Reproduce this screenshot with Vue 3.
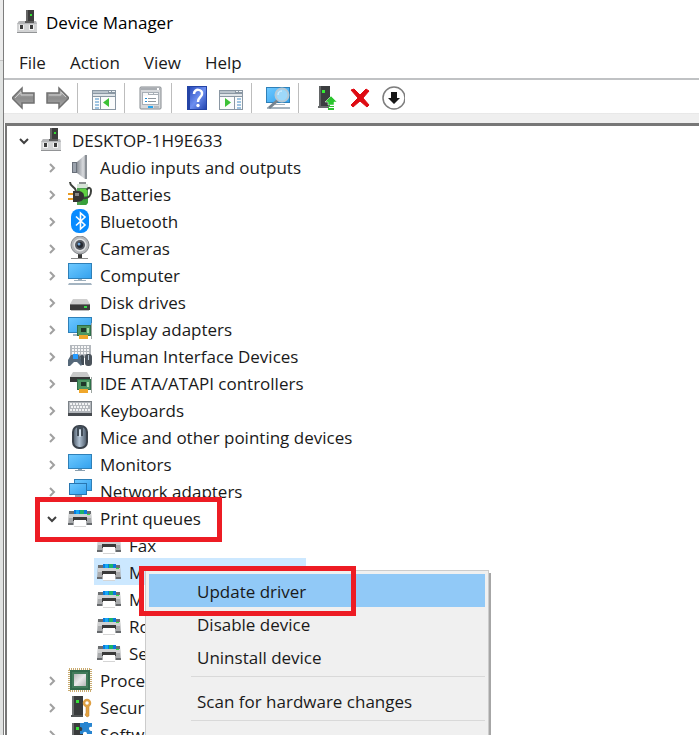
<script setup>
import { computed, reactive } from 'vue'

const menus = ['File', 'Action', 'View', 'Help']

const toolGroups = [
  [{ icon: 'back', label: 'Back' }, { icon: 'forward', label: 'Forward' }],
  [{ icon: 'console-tree', label: 'Show or hide console tree' }],
  [{ icon: 'properties', label: 'Properties' }],
  [{ icon: 'help', label: 'Help' }, { icon: 'action-pane', label: 'Show or hide action pane' }],
  [{ icon: 'scan', label: 'Scan for changes' }],
  [
    { icon: 'update', label: 'Update device' },
    { icon: 'remove', label: 'Uninstall' },
    { icon: 'disable', label: 'Disable' }
  ]
]

const tree = reactive({
  name: 'DESKTOP-1H9E633',
  icon: 'root',
  open: true,
  children: [
    { name: 'Audio inputs and outputs', icon: 'audio' },
    { name: 'Batteries', icon: 'battery' },
    { name: 'Bluetooth', icon: 'bluetooth' },
    { name: 'Cameras', icon: 'camera' },
    { name: 'Computer', icon: 'computer' },
    { name: 'Disk drives', icon: 'disk' },
    { name: 'Display adapters', icon: 'display' },
    { name: 'Human Interface Devices', icon: 'hid' },
    { name: 'IDE ATA/ATAPI controllers', icon: 'ide' },
    { name: 'Keyboards', icon: 'keyboard' },
    { name: 'Mice and other pointing devices', icon: 'mouse' },
    { name: 'Monitors', icon: 'monitor' },
    { name: 'Network adapters', icon: 'network' },
    {
      name: 'Print queues',
      icon: 'printer',
      open: true,
      marked: true,
      children: [
        { name: 'Fax', icon: 'printer', leaf: true },
        { name: 'Microsoft Print to PDF', icon: 'printer', leaf: true, selected: true },
        { name: 'Microsoft XPS Document Writer', icon: 'printer', leaf: true },
        { name: 'Root Print Queue', icon: 'printer', leaf: true },
        { name: 'Send To OneNote', icon: 'printer', leaf: true }
      ]
    },
    { name: 'Processors', icon: 'cpu' },
    { name: 'Security devices', icon: 'security' },
    { name: 'Software components', icon: 'software' }
  ]
})

function flatten(node, level) {
  const rows = [{ node, level }]
  if (node.open && node.children) {
    for (const child of node.children) rows.push(...flatten(child, level + 1))
  }
  return rows
}

const rows = computed(() => flatten(tree, 0))

const contextMenu = [
  [
    { label: 'Update driver', active: true },
    { label: 'Disable device' },
    { label: 'Uninstall device' }
  ],
  [{ label: 'Scan for hardware changes' }],
  []
]
</script>

<template>
  <div class="desktop">
    <svg class="sprite" aria-hidden="true">
      <defs>
        <linearGradient id="g-blue" x1="0" y1="0" x2="1" y2="1">
          <stop offset="0" stop-color="#6cc8ff" /><stop offset="1" stop-color="#35a2ee" />
        </linearGradient>
        <linearGradient id="g-gray" x1="0" y1="0" x2="0" y2="1">
          <stop offset="0" stop-color="#bcbcbc" /><stop offset="0.5" stop-color="#8c8c8c" /><stop offset="1" stop-color="#a8a8a8" />
        </linearGradient>
        <linearGradient id="g-metal" x1="0" y1="0" x2="1" y2="0">
          <stop offset="0" stop-color="#8b9097" /><stop offset="0.6" stop-color="#d9dbde" /><stop offset="1" stop-color="#8d9299" />
        </linearGradient>
        <linearGradient id="g-help" x1="0" y1="0" x2="1" y2="1">
          <stop offset="0" stop-color="#2c4dbd" /><stop offset="0.5" stop-color="#6d8ff0" /><stop offset="1" stop-color="#2345b0" />
        </linearGradient>
        <linearGradient id="g-mouse" x1="0" y1="0" x2="1" y2="0">
          <stop offset="0" stop-color="#4c5967" /><stop offset="0.45" stop-color="#b1c2d3" /><stop offset="1" stop-color="#465463" />
        </linearGradient>
        <linearGradient id="g-silver" x1="0" y1="0" x2="1" y2="1">
          <stop offset="0" stop-color="#b4b7b7" /><stop offset="0.5" stop-color="#e8eaea" /><stop offset="1" stop-color="#b4b7b7" />
        </linearGradient>
      </defs>

      <symbol id="i-root" viewBox="0 0 24 24">
        <path d="M10 0h8v13h-8z" fill="#3d3d3d" /><path d="M10 0h2v13h-2z" fill="#666" />
        <rect x="14" y="4" width="2" height="2" fill="#32e032" />
        <path d="M3 11h17l1 3v9H1v-9z" fill="#d2d3d4" /><path d="M3 11h17l1 3H1z" fill="#b4b5b7" />
        <path d="M1 22h20v1H1z" fill="#929496" />
        <path d="M9 11h9v2h-9z" fill="#5b5b5b" />
        <path d="M3 15h5v5H3zM13 15h5v5h-5z" fill="#f2f2f2" /><path d="M4 15h3v4H4zM14 15h3v4h-3z" fill="#3c3c3c" />
      </symbol>
      <symbol id="i-audio" viewBox="0 0 24 24">
        <path d="M4 7h5v11H4z" fill="#69707a" /><path d="M5 8h3v9H5z" fill="#9ba2ac" />
        <path d="M9 7l8-7h2v24h-2l-8-6z" fill="url(#g-metal)" /><path d="M17 0h2v24h-2z" fill="#8a8f95" />
      </symbol>
      <symbol id="i-battery" viewBox="0 0 24 24">
        <path d="M11 0h7v2h-7z" fill="#8b9090" /><path d="M9 2h11v19l-2 2H9z" fill="#4fa052" />
        <path d="M9 2h11v4H9z" fill="#d7e4d7" /><path d="M12 7h7v7h-7z" fill="#5fd042" />
        <path d="M14 14h6v6l-2 3h-6z" fill="#38a03a" />
        <path d="M2 0c0 5 5 4 6 9M15 16c6 1 8-3 8-7 0-4-3-4-4-1" fill="none" stroke="#3d413c" stroke-width="2" />
        <path d="M0 11h6v2H0zM0 16h6v2H0z" fill="#e79a24" />
        <path d="M5 9h4c5 0 7 2 7 5s-2 6-7 6H5z" fill="#343434" /><path d="M7 11h4v3H7z" fill="#858585" />
      </symbol>
      <symbol id="i-bluetooth" viewBox="0 0 24 24">
        <rect x="3" y="0" width="18" height="24" rx="8" fill="#078bff" />
        <path d="M8 7.500l9 8.500-4.500 4V4L17 8l-9 8.500" fill="none" stroke="#fff" stroke-width="1.600" />
      </symbol>
      <symbol id="i-camera" viewBox="0 0 24 24">
        <path d="M10 18h4v4h-4z" fill="#3a3a3a" /><path d="M3 22h17v1H3z" fill="#888" />
        <circle cx="12" cy="9" r="9" fill="#b4b6b9" stroke="#85888c" />
        <circle cx="12" cy="9" r="6.500" fill="#e1e3e5" /><circle cx="12" cy="9" r="5" fill="#555960" />
        <circle cx="12" cy="9" r="3" fill="#23272e" /><circle cx="11" cy="8" r="1.500" fill="#70a6db" />
      </symbol>
      <symbol id="i-computer" viewBox="0 0 24 24">
        <path d="M0 0h24v16H0z" fill="#2f80b8" /><path d="M1 1h22v14H1z" fill="url(#g-blue)" />
        <path d="M10 16h4v1h-4zM6 17h12v1H6z" fill="#9fb0bd" /><path d="M1 20h22l1 2H0z" fill="#a4b4c1" />
      </symbol>
      <symbol id="i-disk" viewBox="0 0 24 24">
        <path d="M5 9h14l3 5H2z" fill="#cfcfcf" /><path d="M2 14h20v6H2z" fill="#3b3b3b" />
        <path d="M2 14h20v1H2z" fill="#777" /><path d="M16 16h3v2h-3z" fill="#38d848" /><path d="M3 20h18v1H3z" fill="#bbb" />
      </symbol>
      <symbol id="i-board" viewBox="0 0 24 24">
        <path d="M9 8h14v11H9z" fill="#2f7049" /><path d="M10 9h12v9H10z" fill="#4d9663" />
        <path d="M13 11h5v4h-5z" fill="#20382a" /><path d="M19 11h2v5h-2z" fill="#a2d8a6" />
        <path d="M11 18h9v4h-9z" fill="#f0a72b" /><path d="M23 6h1v16h-1z" fill="#9da5a0" />
      </symbol>
      <symbol id="i-display" viewBox="0 0 24 24">
        <path d="M0 0h24v16H0z" fill="#2f80b8" /><path d="M1 1h22v14H1z" fill="url(#g-blue)" />
        <path d="M5 17h5v2H5z" fill="#a4b4c1" /><use href="#i-board" />
      </symbol>
      <symbol id="i-hid" viewBox="0 0 24 24">
        <path d="M2 1h21v13H2z" fill="#b4b8bd" />
        <path d="M4 3h18M4 6h18M4 9h18" stroke="#f7f7f7" stroke-width="2" stroke-dasharray="2 1" />
        <path d="M3 11h8l4 8-2 3-4-4H6l-4 4H0v-6z" fill="#566879" />
        <path d="M5 10h5v5H5z" fill="#269bff" /><path d="M12 12c2-2 4-1 4 1v8h-2z" fill="#414c56" />
        <rect x="17" y="10" width="7" height="12" rx="3" fill="#4b535b" /><path d="M20 11h1v5h-1z" fill="#b7c7d6" />
      </symbol>
      <symbol id="i-ide" viewBox="0 0 24 24">
        <path d="M5 1h14l3 5H2z" fill="#c9caca" /><path d="M2 6h20v5H2z" fill="#363838" /><use href="#i-board" />
      </symbol>
      <symbol id="i-keyboard" viewBox="0 0 24 24">
        <path d="M0 3h24v15H0z" fill="#7b8187" /><path d="M1 4h22v11H1z" fill="#b3b7bc" />
        <path d="M2 6h20M3 9h18M2 12h20" stroke="#f2f3f4" stroke-width="2" stroke-dasharray="2 1" />
        <path d="M0 15h24v3H0z" fill="#474b50" />
      </symbol>
      <symbol id="i-mouse" viewBox="0 0 24 24">
        <rect x="5" y="1" width="14" height="22" rx="6" fill="url(#g-mouse)" stroke="#3a424b" stroke-width="2" />
        <path d="M9 1h6v10H9z" fill="#414c57" /><rect x="11" y="4" width="2" height="8" rx="1" fill="#d5e2ed" />
      </symbol>
      <symbol id="i-monitor" viewBox="0 0 24 24">
        <path d="M0 2h24v15H0z" fill="#2f80b8" /><path d="M1 3h22v13H1z" fill="url(#g-blue)" />
        <path d="M10 17h4v1h-4zM7 18h10v1H7z" fill="#8ba0b0" />
      </symbol>
      <symbol id="i-network" viewBox="0 0 24 24">
        <path d="M6 0h18v12H6z" fill="#2f80b8" /><path d="M7 1h16v10H7z" fill="url(#g-blue)" />
        <path d="M1 4h18v12H1z" fill="#2876b0" /><path d="M2 5h16v10H2z" fill="url(#g-blue)" />
        <path d="M7 16h7v2H7z" fill="#8ba0b0" /><path d="M2 21h16v2H2z" fill="#4bb957" />
      </symbol>
      <symbol id="i-printer" viewBox="0 0 24 24">
        <path d="M1 5h22l1 14H0z" fill="#a9abad" /><path d="M1 5h22v3H1z" fill="#6b6e70" />
        <path d="M6 4h13v4H6z" fill="#0b78dd" /><path d="M8 4h3v4H8z" fill="#14a9f2" /><path d="M12 4h4v4h-4z" fill="#1bb36b" />
        <path d="M1 8h22v4H1z" fill="#cfd0d1" /><path d="M19 8h3v1h-3z" fill="#38df4a" />
        <path d="M0 17h5v2H0zM19 17h5v2h-5z" fill="#66696c" />
        <path d="M5 11h14v4H5z" fill="#3a3a3a" /><path d="M6 14h12v6H6z" fill="#fff" /><path d="M6 20h12v1H6z" fill="#d5d5d5" />
      </symbol>
      <symbol id="i-cpu" viewBox="0 0 24 24">
        <rect x="1" y="1" width="22" height="22" fill="none" stroke="#c9ab70" stroke-width="2" stroke-dasharray="1 1" />
        <path d="M2 2h20v20H2z" fill="#2f6a4b" /><path d="M4 4h16v16H4z" fill="#417c5b" />
        <path d="M6 6h12v12H6z" fill="url(#g-silver)" />
      </symbol>
      <symbol id="i-tower" viewBox="0 0 24 24">
        <path d="M4 1h11v19H4z" fill="#393b3c" /><path d="M4 1h2v19H4z" fill="#6c6f70" />
        <path d="M8 5h3v3H8z" fill="#36e038" /><path d="M3 20h12v2H3z" fill="#515455" />
      </symbol>
      <symbol id="i-security" viewBox="0 0 24 24">
        <use href="#i-tower" />
        <path d="M18 11h3v10l-2 1-2-2 1-2z" fill="#e5a441" stroke="#b8792a" stroke-width="0.500" />
        <circle cx="19" cy="8" r="3" fill="#fff" stroke="#dfa044" stroke-width="2.500" />
      </symbol>
      <symbol id="i-software" viewBox="0 0 24 24">
        <use href="#i-tower" />
        <path d="M12 1h4c-1-4 5-4 4 0h4v4c-4-1-4 4 0 4v3h-5c0-3-4-3-4 0h-3V9c3 1 3-5 0-4z" fill="#2885d0" />
      </symbol>

      <symbol id="i-back" viewBox="0 0 24 24">
        <path d="M0 12L10 2v5h12v10H10v5z" fill="url(#g-gray)" stroke="#707070" stroke-width="1.500" />
        <path d="M3 12l6-6v3h12" fill="none" stroke="#ccc" />
      </symbol>
      <symbol id="i-forward" viewBox="0 0 24 24">
        <path d="M24 12L14 2v5H2v10h12v5z" fill="url(#g-gray)" stroke="#707070" stroke-width="1.500" />
        <path d="M4 9h12V6l5 5" fill="none" stroke="#ccc" />
      </symbol>
      <symbol id="i-panel" viewBox="0 0 24 24">
        <path d="M0 4h24v20H0z" fill="#8a97a3" /><path d="M1 5h15v2H1z" fill="#b9c3cb" />
        <path d="M17 5h2v1h-2zM20 5h3v1h-3z" fill="#eef2f5" /><path d="M1 8h22v2H1z" fill="#dfe4e8" />
        <path d="M1 11h22v12H1z" fill="#fbfcfc" />
      </symbol>
      <symbol id="i-console-tree" viewBox="0 0 24 24">
        <use href="#i-panel" /><path d="M8 10h1v13H8z" fill="#8a97a3" />
        <path d="M3 13h4M3 16h4M3 19h4M3 22h4" stroke="#438cc7" /><path d="M17 12v9l-6-4.500z" fill="#3dc136" />
      </symbol>
      <symbol id="i-action-pane" viewBox="0 0 24 24">
        <use href="#i-panel" /><path d="M15 10h1v13h-1z" fill="#8a97a3" />
        <path d="M18 13h4M18 16h4M18 19h4M18 22h4" stroke="#438cc7" /><path d="M6 12v9l6-4.500z" fill="#3dc136" />
      </symbol>
      <symbol id="i-properties" viewBox="0 0 24 24">
        <rect x="1" y="1" width="21" height="22" rx="1" fill="#d7d9dc" stroke="#858a8f" />
        <path d="M2 2h19v2H2z" fill="#a9adb2" /><path d="M18 2h2v2h-2z" fill="#fff" />
        <path d="M3 6h17v13H3z" fill="#a8afb6" /><path d="M4 9h15v9H4z" fill="#fff" /><path d="M4 7h5v3H4zM10 7h4v1h-4zM15 7h4v1h-4z" fill="#f6f7f8" />
        <path d="M6 12h2v1H6zM6 15h2v1H6z" fill="#258bd0" /><path d="M9 12h8v1H9zM9 15h8v1H9z" fill="#8f979e" />
        <path d="M9 20h5v2H9z" fill="#27a5ee" /><path d="M15 20h5v2h-5z" fill="#b6bbc0" />
      </symbol>
      <symbol id="i-help" viewBox="0 0 24 24">
        <path d="M1 0h20v24H1z" fill="#2444a6" /><path d="M4 1h16v22H4z" fill="url(#g-help)" />
        <path d="M8 8c0-6 9-5 8 0 0 3-4 3-4 8" fill="none" stroke="#fff" stroke-width="2.500" /><circle cx="12" cy="19.500" r="1.700" fill="#fff" />
      </symbol>
      <symbol id="i-scan" viewBox="0 0 24 24">
        <path d="M0 1h24v16H0z" fill="#2f80b8" /><path d="M1 2h22v14H1z" fill="url(#g-blue)" />
        <path d="M9 18h10v1H9zM1 21h23v2H1z" fill="#a5b3be" />
        <path d="M12 14l-9 8" stroke="#76838e" stroke-width="3" />
        <circle cx="16" cy="9" r="6.500" fill="#9ed8fa" stroke="#b5c9d6" stroke-width="2" /><path d="M12 9c0-3 2-4 4-4" fill="none" stroke="#e2f4ff" />
      </symbol>
      <symbol id="i-update" viewBox="0 0 24 24">
        <path d="M6 0h11v20H6z" fill="#3b3d3f" /><path d="M6 0h2v20H6z" fill="#626566" />
        <path d="M9 4h3v3H9z" fill="#34ec34" /><path d="M5 20h11v2H5z" fill="#686b6d" />
        <path d="M18 10l6 6h-3v3h-6v-3h-3z" fill="#2bc52e" stroke="#fff" stroke-width="0.500" /><path d="M15 20h6v1h-6zM15 22h6v2h-6z" fill="#2bc52e" />
      </symbol>
      <symbol id="i-remove" viewBox="0 0 24 24">
        <path d="M4 4l7 8-7 7 2 2 7-6 7 6 2-2-6-7 6-7-3-2-6 6-6-6z" fill="#de0b13" stroke="#de0b13" />
      </symbol>
      <symbol id="i-disable" viewBox="0 0 24 24">
        <circle cx="13" cy="12" r="11" fill="#fff" stroke="#7d7d7d" stroke-width="1.500" />
        <path d="M10 6h6v6h3l-6 6-6-6h3z" fill="#171717" />
      </symbol>
    </svg>

    <main class="window">
      <header class="titlebar">
        <svg class="icon"><use href="#i-root" /></svg>
        <h1>Device Manager</h1>
      </header>

      <nav class="menubar">
        <button v-for="m in menus" :key="m" type="button">{{ m }}</button>
      </nav>

      <div class="toolbar" role="toolbar" aria-label="Tools">
        <div v-for="(group, g) in toolGroups" :key="g" class="group">
          <button v-for="t in group" :key="t.icon" type="button" :aria-label="t.label">
            <svg class="icon"><use :href="'#i-' + t.icon" /></svg>
          </button>
        </div>
      </div>

      <ul class="tree" role="tree" aria-label="Devices">
        <li
          v-for="row in rows"
          :key="row.node.name"
          class="row"
          :class="'level-' + row.level"
          role="treeitem"
          :aria-expanded="row.node.leaf ? undefined : !!row.node.open"
          :aria-selected="!!row.node.selected"
        >
          <button
            v-if="!row.node.leaf"
            class="chevron"
            :class="{ open: row.node.open }"
            type="button"
            :aria-label="'Toggle ' + row.node.name"
            @click="row.node.open = !row.node.open"
          >
            <svg viewBox="0 0 16 16"><path d="M6 4l4 4-4 4" /></svg>
          </button>
          <span class="label" :class="{ selected: row.node.selected }">
            <svg class="icon"><use :href="'#i-' + row.node.icon" /></svg>
            <span class="name">{{ row.node.name }}</span>
          </span>
          <span v-if="row.node.marked" class="mark mark-row"></span>
        </li>
      </ul>
    </main>

    <div class="context" role="menu" aria-label="Device actions">
      <div v-for="(section, s) in contextMenu" :key="s" class="section">
        <button
          v-for="item in section"
          :key="item.label"
          type="button"
          role="menuitem"
          :class="{ active: item.active }"
        >
          {{ item.label }}
          <span v-if="item.active" class="mark mark-item"></span>
        </button>
      </div>
    </div>
  </div>
</template>

<style>
body {
  background: #fff;
}
</style>

<style scoped>
.desktop {
  position: relative;
  box-sizing: border-box;
  height: 100vh;
  overflow: hidden;
  padding-left: 3px;
  background: linear-gradient(#ececec 60px, #c4c4c4 60px, #c4c4c4 61px, #e1e3e2 61px);
  color: #1a1a1a;
  font: 17px/27px "Open Sans", "Noto Sans", sans-serif;
}

.sprite {
  position: absolute;
  width: 0;
  height: 0;
}

button {
  margin: 0;
  padding: 0;
  border: 0;
  background: none;
  color: inherit;
  font: inherit;
}

.window {
  display: flex;
  flex-direction: column;
  box-sizing: border-box;
  height: 100%;
  border-left: 1px solid #7d7d7d;
  background: #fff;
}

.titlebar {
  display: flex;
  flex: none;
  align-items: center;
  gap: 6px;
  height: 44px;
  padding-left: 12px;
}

h1 {
  margin: 0;
  color: #000;
  font-size: 17px;
  font-weight: 400;
}

.menubar {
  display: flex;
  flex: none;
  box-sizing: border-box;
  gap: 24px;
  height: 36px;
  padding: 2px 0 0 15px;
  border-bottom: 2px solid #c0c2c4;
}

.icon {
  display: block;
  flex: none;
  width: 24px;
  height: 24px;
  overflow: visible;
}

.toolbar {
  display: flex;
  flex: none;
  box-sizing: border-box;
  height: 43px;
  padding: 3px 0 10px;
  background: linear-gradient(#fff 33px, #e2e2e2 33px, #efefef 34px);
}

.group {
  display: flex;
  align-items: center;
  gap: 9px;
  padding: 0 8px 0 14px;
  border-right: 1px solid #bdbdbd;
}

.group:first-child {
  padding-left: 8px;
}

.group:last-child {
  gap: 10px;
  border-right: 0;
}

.tree {
  flex: 1;
  min-height: 0;
  margin: 0 0 0 1px;
  padding: 0;
  border-top: 3px solid #777;
  border-left: 2px solid #777;
  list-style: none;
}

.row {
  position: relative;
  display: flex;
  height: 27px;
  white-space: nowrap;
}

.level-0 {
  padding-left: 6px;
}

.level-1 {
  padding-left: 34px;
}

.level-2 {
  padding-left: 87px;
}

.chevron {
  flex: none;
  width: 24px;
}

.chevron svg {
  display: block;
  width: 16px;
  height: 16px;
  margin: 2px 0 0 3px;
}

.chevron path {
  fill: none;
  stroke: #a0a0a0;
  stroke-width: 2;
}

.chevron.open svg {
  transform: rotate(90deg);
}

.chevron.open path {
  stroke: #404040;
}

.label {
  display: flex;
  align-items: flex-start;
  gap: 8px;
  padding: 0 3px;
}

.label .icon {
  margin-top: 2px;
}

.name {
  padding-top: 1px;
}

.label.selected {
  background: #cce8ff;
}

.mark {
  position: absolute;
  z-index: 1;
  box-sizing: border-box;
  border: 5px solid #ed1c24;
  pointer-events: none;
}

.mark-row {
  top: -7px;
  left: 28px;
  width: 187px;
  height: 45px;
}

.context {
  position: absolute;
  top: 570px;
  left: 145px;
  box-sizing: border-box;
  width: 344px;
  padding: 3px;
  border: 1px solid #ccc;
  background: #f0f0f0;
  box-shadow: 2px 3px 0 #a6a6a6;
}

.section + .section {
  min-height: 33px;
  margin-top: 3px;
  padding-top: 8px;
}

.section + .section::before {
  display: block;
  height: 1px;
  margin: -8px 0 7px 42px;
  background: #d9d9d9;
  content: "";
}

.section button {
  position: relative;
  display: block;
  box-sizing: border-box;
  width: 100%;
  height: 33px;
  padding: 2px 0 0 48px;
  text-align: left;
}

.section button.active {
  background: #91c9f7;
}

.mark-item {
  top: -8px;
  left: -10px;
  width: 217px;
  height: 50px;
}
</style>
